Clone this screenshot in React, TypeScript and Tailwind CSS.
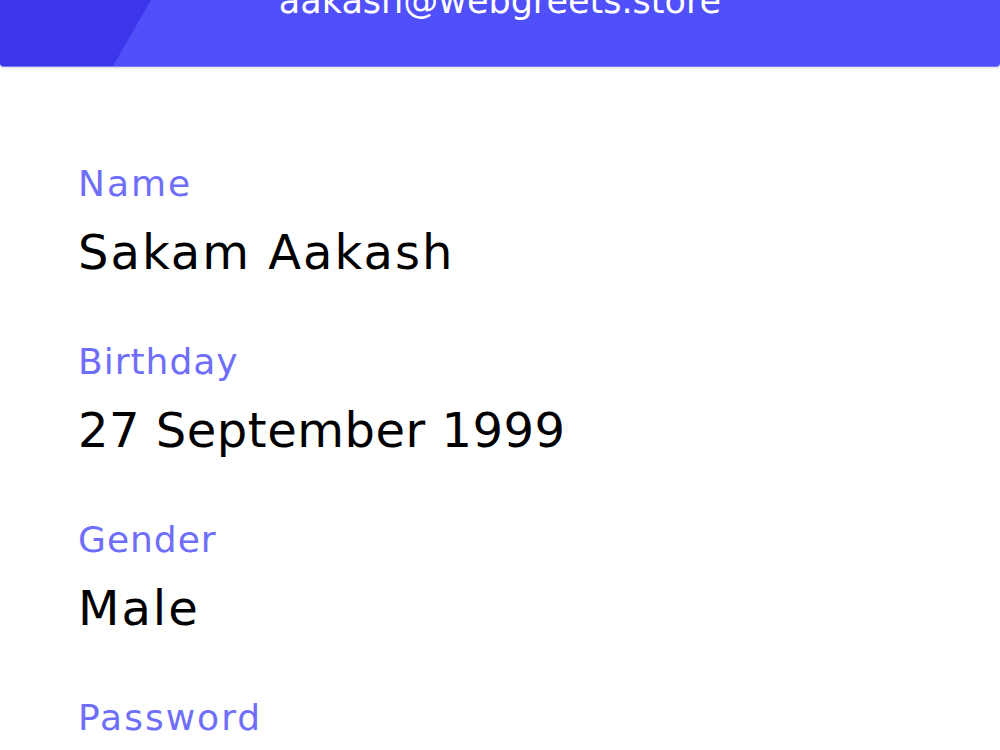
import React from "react";

const fields = [
  { label: "Name", value: "Sakam Aakash", lt: "tracking-[2px]", vt: "tracking-[2px]" },
  { label: "Birthday", value: "27 September 1999", lt: "tracking-[1px]", vt: "tracking-[0.5px]" },
  { label: "Gender", value: "Male", lt: "tracking-[1px]", vt: "tracking-[2px]" },
  { label: "Password", value: "••••••••", lt: "tracking-[2px]", vt: "tracking-[2px]" },
];

export default function App() {
  return (
    <div className="h-[750px] w-full overflow-hidden bg-white font-['DejaVu_Sans',_sans-serif]">
      <header className="relative h-[67px] overflow-hidden rounded-b-[4px] border-b border-[#7b7bfc] bg-[#5050fb] shadow-[0_1px_3px_rgba(0,0,0,0.15)]">
        <svg className="absolute left-0 top-0 h-[66px] w-[160px]" viewBox="0 0 160 66" preserveAspectRatio="none">
          <polygon points="0,0 151,0 113,66 0,66" fill="#3b36e9" />
        </svg>
        <div className="relative flex justify-center">
          <span className="mt-[-16px] text-[35px] leading-none text-white">aakash@webgreets.store</span>
        </div>
      </header>
      <main className="flex flex-col pl-[78px] pt-[95px]">
        {fields.map((f) => (
          <div key={f.label} className="flex h-[178px] shrink-0 flex-col">
            <span className={`text-[36px] leading-[44px] text-[#6e6efb] ${f.lt}`}>{f.label}</span>
            <span className={`mt-[18px] text-[48px] leading-[56px] text-black ${f.vt}`}>{f.value}</span>
          </div>
        ))}
      </main>
    </div>
  );
}
